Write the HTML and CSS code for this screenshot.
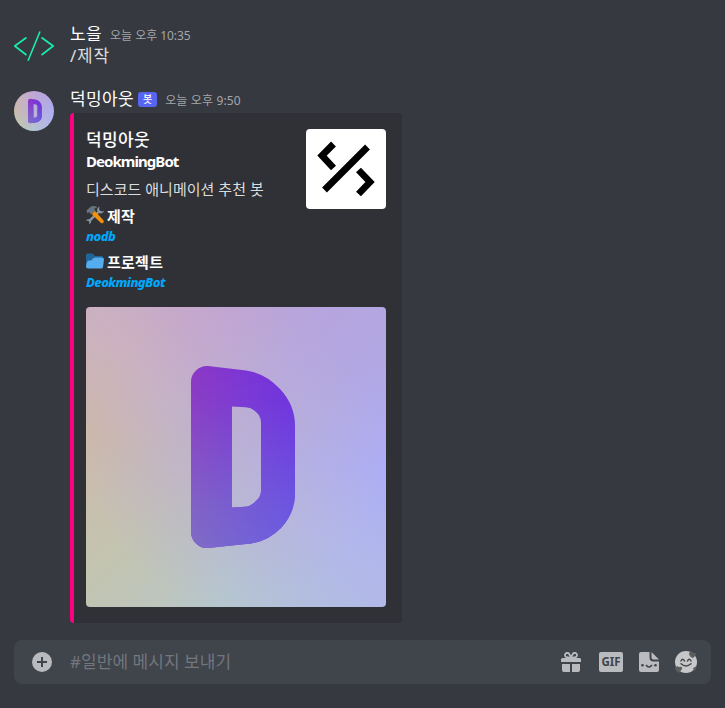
FILE: index.html
```html
<!DOCTYPE html>
<html lang="ko">
<head>
<meta charset="utf-8">
<title>일반</title>
<link rel="stylesheet" href="styles.css">
</head>
<body>
<svg width="0" height="0" class="defs" aria-hidden="true">
  <defs>
    <linearGradient id="top" x1="0" y1="0" x2="1" y2="0">
      <stop offset="0" stop-color="#8d38c4"/><stop offset=".5" stop-color="#7d35d5"/><stop offset="1" stop-color="#7030de"/>
    </linearGradient>
    <linearGradient id="bottom" x1="0" y1="0" x2="1" y2="0">
      <stop offset="0" stop-color="#7f6cc5"/><stop offset="1" stop-color="#6a5ee2"/>
    </linearGradient>
    <linearGradient id="fade" x1="0" y1="0" x2="0" y2="1">
      <stop offset="0" stop-color="#000"/><stop offset=".2" stop-color="#222"/><stop offset=".75" stop-color="#ccc"/><stop offset="1" stop-color="#fff"/>
    </linearGradient>
    <mask id="lower" maskUnits="userSpaceOnUse" x="105" y="58" width="105" height="184"><rect x="105" y="58" width="105" height="184" fill="url(#fade)"/></mask>
    <path id="d-shape" fill-rule="evenodd" d="M105 75Q105 68 110 63.500Q115 58.500 122 59L160 63.500Q179 66 194 82Q209 98 209 119V189Q208 207 195 221Q180 236 160 237L122 241Q115 241.500 110 236.500Q105 232 105 225ZM146 99.500V200.500L159 199.800Q164 199.500 169 195Q175 190 175 184V115Q175 109 169 104Q165 100.500 160 100.200Z"/>
    <symbol id="letter-d" viewBox="0 0 300 300">
      <use href="#d-shape" fill="url(#top)"/>
      <use href="#d-shape" fill="url(#bottom)" mask="url(#lower)"/>
    </symbol>
  </defs>
</svg>
<main class="chat">
  <article class="message first">
    <svg class="avatar" viewBox="0 0 40 40" fill="none" stroke="#18efae" stroke-width="1.600"><path d="M12.500 11.500.8 20l11.700 9M27.500 11.500 39.200 20l-11.700 9M26 5.500 14 34.800"/></svg>
    <div class="content">
      <header><span class="name">노을</span><time>오늘 오후 10:35</time></header>
      <p class="text">/제작</p>
    </div>
  </article>
  <article class="message second">
    <div class="avatar art round"><svg class="letter" viewBox="0 0 300 300"><use href="#letter-d" width="300" height="300"/></svg></div>
    <div class="content">
      <header><span class="name">덕밍아웃</span><span class="tag">봇</span><time>오늘 오후 9:50</time></header>
      <section class="embed">
        <div class="embed-top">
          <div class="embed-text">
            <div class="author">덕밍아웃</div>
            <div class="title">DeokmingBot</div>
            <div class="description">디스코드 애니메이션 추천 봇</div>
            <div class="field"><svg class="emoji" viewBox="0 0 36 36"><path fill="#8899a6" d="M27 1c-4 2-6 6-4 10L6 27c-2-1-5 0-6 3l4-1 3 3-1 4c4-1 5-4 4-6l16-16c4 2 8 0 10-4l-6 1-4-4z"/><path fill="#66757f" d="M1 9 10 1q6-2 13 1l-7 4 3 3-9 8-4-5-3 3z"/><path fill="#f4900c" d="m14 13 4-3 17 19c2 4-2 7-5 5L12 17z"/></svg>제작</div>
            <div class="link">nodb</div>
            <div class="field gap"><svg class="emoji" viewBox="0 0 36 36"><path fill="#226699" d="M0 6q0-3 3-3h9q2 0 4 3l2 2h13q3 0 3 4v18H0z"/><path fill="#55acee" d="M10 17q2-1 4-4 2-2 5-2h13q4 0 4 4l-2 15q0 3-4 3H4q-4 0-4-4l2-9q1-3 4-3z"/></svg>프로젝트</div>
            <div class="link">DeokmingBot</div>
          </div>
          <svg class="thumb" viewBox="0 0 80 80"><rect width="80" height="80" fill="#fff"/><path d="M27.500 15 16 26.500 27.500 39M52.500 41 64 53 52.500 65M61.500 18 18.500 61" fill="none" stroke="#000" stroke-width="6.800"/></svg>
        </div>
        <div class="picture art"><svg class="letter" viewBox="0 0 300 300"><use href="#letter-d" width="300" height="300"/></svg></div>
      </section>
    </div>
  </article>
  <footer class="composer">
    <svg class="plus" viewBox="0 0 20 20"><circle cx="10" cy="10" r="10" fill="#b9bbbe"/><path d="M10 5v10M5 10h10" stroke="#40444b" stroke-width="2"/></svg>
    <span class="placeholder">#일반에 메시지 보내기</span>
    <svg class="gift" viewBox="0 0 20 20" fill="#b9bbbe"><path d="M1.500 6h17Q20 6 20 7.500V10H0V7.500Q0 6 1.500 6zM1 12h8v8H3q-2 0-2-2zM11 12h8v6q0 2-2 2h-6z"/><path d="M10 5.500Q3.500 6 4 2.800 5-.5 8 1.500L10 5.500 12 1.500Q15-.5 16 2.800 16.500 6 10 5.500" fill="none" stroke="#b9bbbe" stroke-width="1.800"/></svg>
    <span class="gif">GIF</span>
    <svg class="sticker" viewBox="0 0 20 20"><path d="M2 0h8.500v5.500q0 4 4 4H20V18q0 2-2 2H2q-2 0-2-2V2q0-2 2-2zM12.500 0 20 7.500h-5.500q-2 0-2-2z" fill="#b9bbbe"/><g fill="#40444b"><circle cx="3.500" cy="13.300" r="1.300"/><circle cx="16.500" cy="13.300" r="1.300"/></g><path d="M7 13q3 4 6 0" fill="none" stroke="#40444b" stroke-width="1.600"/></svg>
    <svg class="face" viewBox="0 0 22 22"><circle cx="11" cy="11" r="11" fill="#c6c7c8"/><g fill="#5c5e60"><path d="M14 2q2-3 4 0 3-1 3 2l-3 3q-4-1-4-5z"/><path d="M0 17q2-3 4-1 4-1 3 2l-3 4q-3-1-4-5z"/><path d="m18 17 4-2q-1 4-3 5z"/></g><path d="M6 10q1.600-3.500 3.500 0M12.500 10q1.600-3.500 3.500 0M6 12.800q5 4.500 10 0" fill="none" stroke="#45484d" stroke-width="1.500" stroke-linecap="round"/></svg>
  </footer>
</main>
</body>
</html>
```
FILE: styles.css
```css
* { box-sizing: border-box; }
body {
  margin: 0;
  background: #36393f;
  color: #dcddde;
  font-family: "Noto Sans", "Noto Sans CJK KR", sans-serif;
  font-size: 16px;
}
.defs { position: absolute; }
.chat { height: 708px; padding: 23px 14px 0; display: flex; flex-direction: column; }
.message { display: flex; gap: 16px; }
.first { height: 65px; }
.avatar { width: 40px; height: 40px; flex: none; margin-top: 3px; }
.content { min-width: 0; }
header { height: 22px; line-height: 22px; display: flex; align-items: center; white-space: nowrap; }
.name { color: #fff; font-size: 17px; letter-spacing: .4px; }
time { color: #a3a6aa; font-size: 12px; margin-left: 8px; padding-top: 3px; letter-spacing: -.05px; }
.second time { letter-spacing: .15px; }
.text { margin: 0; font-size: 17px; line-height: 22px; letter-spacing: .8px; }
.tag {
  width: 19px; height: 15px; margin-left: 4px; border-radius: 3px;
  background: #5865f2; color: #fff; font-size: 10px; font-weight: 500; line-height: 14px; text-align: center;
}
.art {
  background:
    radial-gradient(circle at center, #bbb2d5 0, #bbb2d500 70%),
    conic-gradient(#c0a5d2, #b6a5de 30deg, #b2a7e3 55deg, #adaef5 95deg, #b2b9e8 135deg, #b5c6cf 185deg, #bdc5bd 208deg, #c3c4b0 232deg, #cabdae 260deg, #ccb8ac 280deg, #cbb1c0 315deg, #c6a8cb 340deg, #c0a5d2);
}
.round { border-radius: 50%; overflow: hidden; }
.letter { display: block; width: 100%; height: 100%; }
.embed {
  width: 332px; height: 510px; margin-top: 3px; padding: 16px 16px 16px 12px;
  border-left: 4px solid #ff007f; border-radius: 4px; background: #2f3136;
}
.embed-top { display: flex; height: 178px; }
.embed-text { width: 220px; white-space: nowrap; }
.author { height: 21px; line-height: 21px; color: #fff; font-size: 17px; font-weight: 500; letter-spacing: .4px; }
.title { height: 22px; line-height: 22px; color: #fff; font-family: "Noto Sans", sans-serif; font-size: 15px; font-weight: 700; letter-spacing: -.95px; }
.description { height: 32px; line-height: 34px; font-size: 15px; letter-spacing: .03px; }
.field { height: 22px; display: flex; align-items: center; gap: 3px; color: #fff; font-size: 15px; font-weight: 700; letter-spacing: .25px; }
.gap { margin-top: 4px; }
.emoji { width: 18px; height: 18px; }
.link { height: 20px; line-height: 20px; color: #00a8fc; font-size: 13px; font-weight: 800; font-style: italic; letter-spacing: -.53px; }
.thumb { width: 80px; height: 80px; border-radius: 4px; }
.picture { width: 300px; height: 300px; border-radius: 4px; overflow: hidden; }
.composer {
  height: 44px; margin-top: 17px; padding: 0 14px 0 18px; border-radius: 8px;
  background: #40444b; display: flex; align-items: center;
}
.plus { width: 20px; height: 20px; }
.placeholder { flex: 1; margin-left: 18px; padding-bottom: 3px; color: #72767d; font-size: 17px; letter-spacing: .05px; }
.gift { width: 20px; height: 20px; margin-right: 18px; }
.gif { width: 24px; height: 20px; margin-right: 16px; border-radius: 2px; background: #b9bbbe; color: #40444b; font: 700 11.500px/20px "Noto Sans", sans-serif; text-align: center; }
.sticker { width: 20px; height: 20px; margin-right: 16px; }
.face { width: 22px; height: 22px; }
```
